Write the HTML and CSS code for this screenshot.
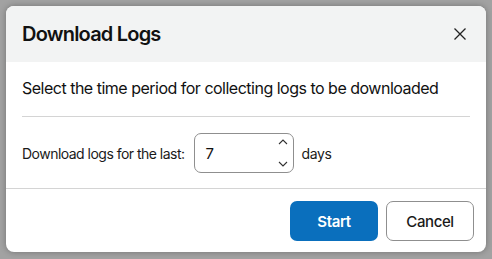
FILE: index.html
```html
<!DOCTYPE html>
<html>
<head>
<meta charset="utf-8">
<link rel="stylesheet" href="styles.css">
</head>
<body>
<div class="dialog">
  <div class="header">
    <h1 class="title">Download Logs</h1>
    <button class="close" aria-label="Close">
      <svg width="12" height="12" viewBox="0 0 12 12"><path d="M0.5 0.5 L11.5 11.5 M11.5 0.5 L0.5 11.5" stroke="#222" stroke-width="1.3" fill="none"/></svg>
    </button>
  </div>
  <div class="body">
    <p class="lead">Select the time period for collecting logs to be downloaded</p>
    <div class="divider"></div>
    <div class="row">
      <span class="label">Download logs for the last:</span>
      <div class="input">
        <span class="value">7</span>
        <div class="spin">
          <svg width="10" height="6" viewBox="0 0 10 6"><path d="M1 5 L5 1 L9 5" stroke="#333" stroke-width="1.1" fill="none"/></svg>
          <svg width="10" height="6" viewBox="0 0 10 6"><path d="M1 1 L5 5 L9 1" stroke="#333" stroke-width="1.1" fill="none"/></svg>
        </div>
      </div>
      <span class="unit">days</span>
    </div>
  </div>
  <div class="footer">
    <button class="btn primary">Start</button>
    <button class="btn secondary">Cancel</button>
  </div>
</div>
</body>
</html>
```
FILE: styles.css
```css
* { box-sizing: border-box; }
html, body { margin: 0; padding: 0; }
body {
  background: #a2a2a2;
  padding: 6px;
  font-family: Inter, "Liberation Sans", sans-serif;
  color: #1a1a1a;
  width: 492px;
  height: 259px;
  overflow: hidden;
}
.dialog {
  width: 480px;
  height: 246px;
  background: #fff;
  border-radius: 8px;
  box-shadow: 0 0 6px rgba(0,0,0,0.3);
  overflow: hidden;
  display: flex;
  flex-direction: column;
}
.header {
  height: 56px;
  background: #f2f3f3;
  display: flex;
  align-items: center;
  justify-content: space-between;
  padding: 0 20px 0 16px;
}
.title {
  margin: 0;
  font-size: 20px;
  font-weight: 600;
  color: #111;
  letter-spacing: -0.8px;
}
.close {
  border: 0;
  background: none;
  padding: 0;
  width: 12px;
  height: 12px;
  display: flex;
}
.body {
  padding: 14px 16px 15px;
}
.lead {
  margin: 0;
  font-size: 16px;
  line-height: 24px;
  color: #111;
  letter-spacing: -0.5px;
}
.divider {
  height: 1px;
  background: #d4d4d4;
  margin: 16px 0 16px;
}
.row {
  display: flex;
  align-items: center;
}
.label {
  font-size: 14px;
  color: #1a1a1a;
  letter-spacing: -0.52px;
}
.input {
  margin-left: 9px;
  width: 100px;
  height: 40px;
  border: 1px solid #8f8f8f;
  border-radius: 7px;
  display: flex;
  align-items: center;
  justify-content: space-between;
  padding: 0 5px 0 11px;
}
.value { font-size: 15px; color: #111; }
.spin {
  display: flex;
  flex-direction: column;
  justify-content: space-between;
  height: 28px;
}
.unit {
  margin-left: 8px;
  font-size: 14px;
  letter-spacing: -0.4px;
}
.footer {
  border-top: 1px solid #d4d4d4;
  padding: 12px 12px 0 0;
  display: flex;
  justify-content: flex-end;
  gap: 8px;
}
.btn {
  width: 88px;
  height: 40px;
  border-radius: 7px;
  font-family: Inter, "Liberation Sans", sans-serif;
  font-size: 15px;
  letter-spacing: -0.4px;
  cursor: pointer;
}
.primary {
  background: #0a6fbd;
  border: 0;
  color: #fff;
  font-weight: 600;
}
.secondary {
  background: #fff;
  border: 1px solid #8f8f8f;
  color: #1a1a1a;
  font-weight: 500;
}
```
